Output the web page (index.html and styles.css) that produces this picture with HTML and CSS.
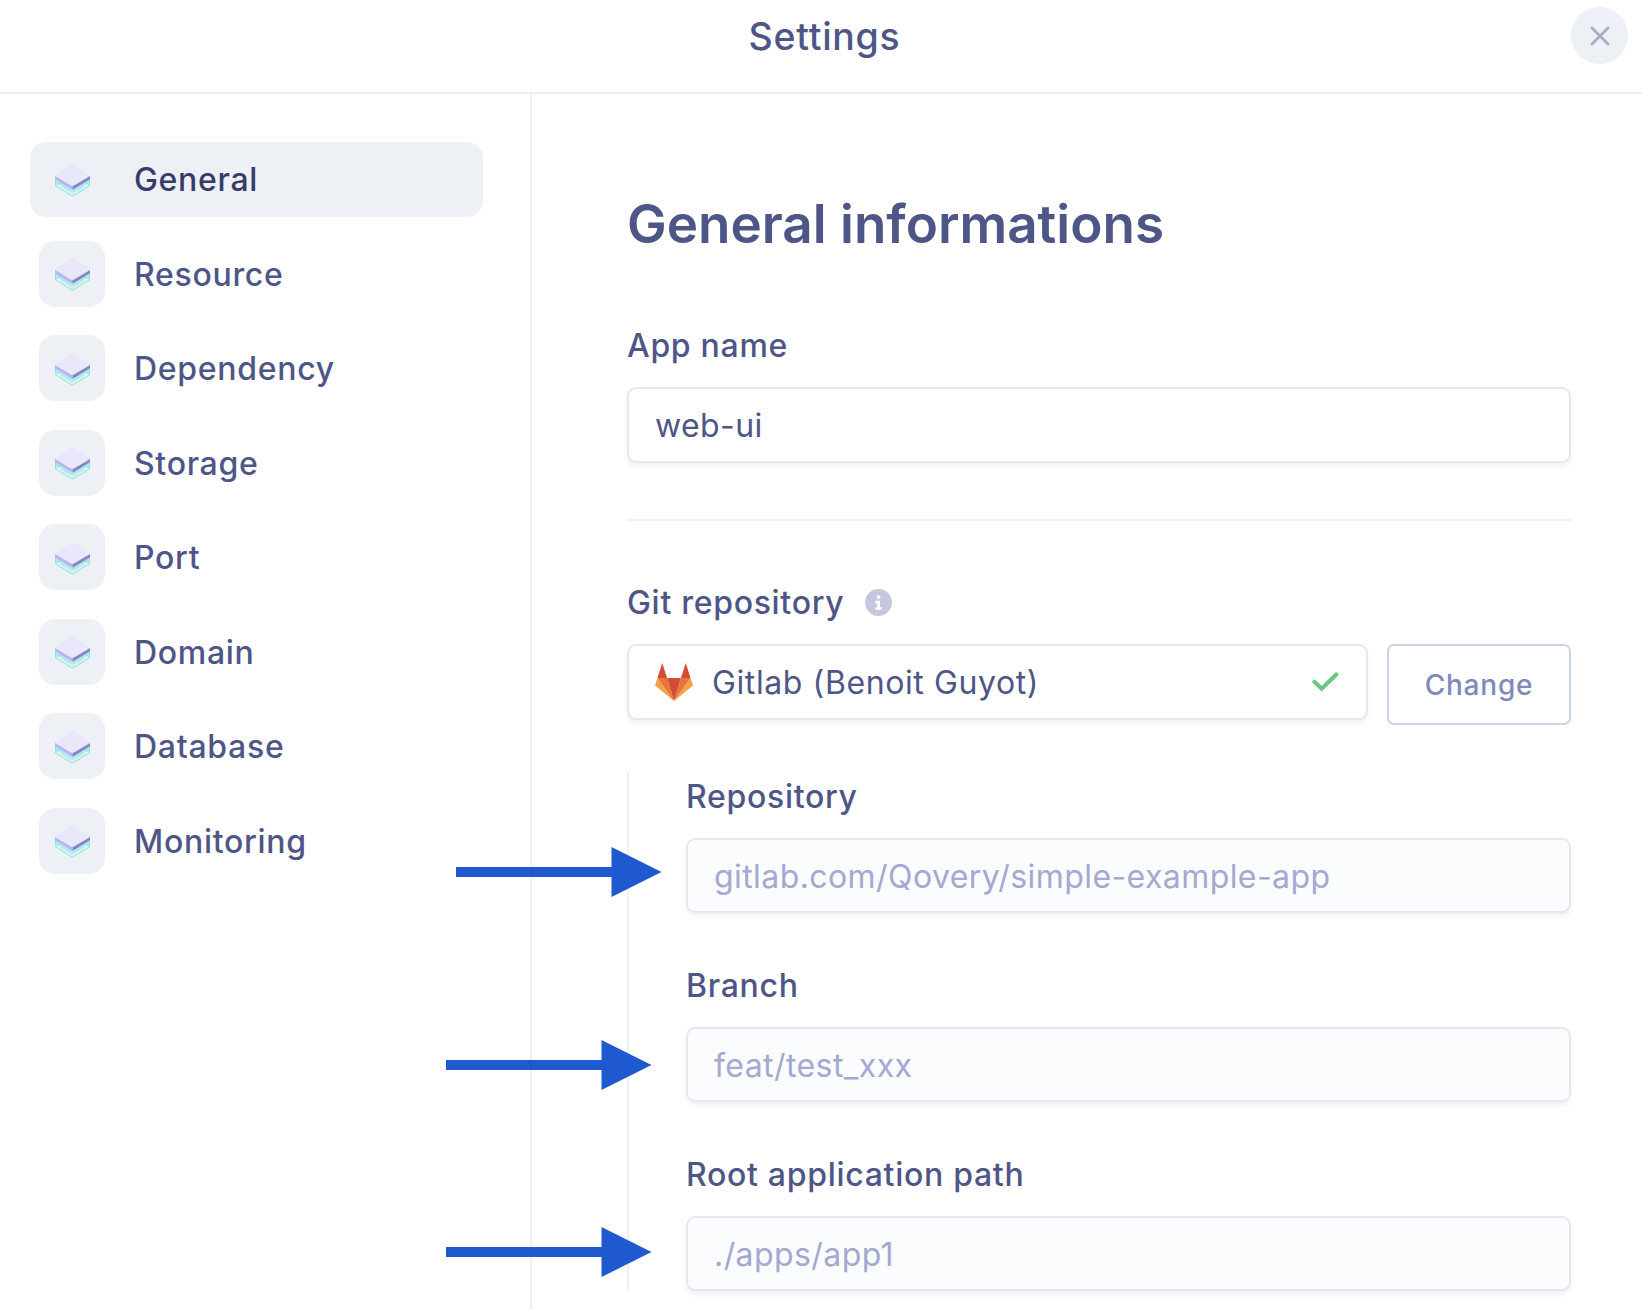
FILE: index.html
```html
<!DOCTYPE html>
<html lang="en">
<head>
<meta charset="utf-8">
<title>Settings</title>
<link rel="stylesheet" href="styles.css">
</head>
<body>
<svg class="defs" width="0" height="0" aria-hidden="true">
  <symbol id="layers" viewBox="0 0 35 33">
    <path d="M.5 14v7.800L16 31.500q1.500.900 3 0l15.500-9.700V14z" fill="#d9f1f2"/>
    <path d="M0 14v5l16 9.300q1.500.800 3 0L35 19v-5z" fill="#aeecea"/>
    <path d="M1.500 20v1.500L3.500 23l3-1.500zM33.500 20v1.500l-2 1.500-3-1.500z" fill="#edf3f7"/>
    <path d="M.5 14v7.800L16 31.500q1.500.900 3 0l15.500-9.700V14M.5 21.500l5-3.500M34.500 21.500l-5-3.500" fill="none" stroke="#86e3dc" stroke-width=".9"/>
    <path d="M0 11.500v3.700l16 9.900 1.500.400v-5z" fill="#b9b3f6"/>
    <path d="M35 11.500v3.700l-16 9.900-1.500.400v-5z" fill="#8a84c4"/>
    <path d="M16 .500q1.500-.800 3 0l15.200 10.300q1.200.900 0 1.800L19 21.500q-1.500.800-3 0L.8 12.600q-1.200-.900 0-1.800z" fill="#e9e7fa"/>
  </symbol>
</svg>
<header class="topbar">
  <h1 class="topbar-title">Settings</h1>
  <button class="close" aria-label="Close">
    <svg width="20" height="20" viewBox="0 0 20 20"><path d="M2 2l16 16m0-16l-16 16" stroke="#9fadc6" stroke-width="2.700" stroke-linecap="round"/></svg>
  </button>
</header>
<div class="body">
  <nav class="sidebar">
    <a class="item active"><span class="tile"><svg><use href="#layers"/></svg></span><span class="name">General</span></a>
    <a class="item"><span class="tile"><svg><use href="#layers"/></svg></span><span class="name">Resource</span></a>
    <a class="item"><span class="tile"><svg><use href="#layers"/></svg></span><span class="name">Dependency</span></a>
    <a class="item"><span class="tile"><svg><use href="#layers"/></svg></span><span class="name">Storage</span></a>
    <a class="item"><span class="tile"><svg><use href="#layers"/></svg></span><span class="name">Port</span></a>
    <a class="item"><span class="tile"><svg><use href="#layers"/></svg></span><span class="name">Domain</span></a>
    <a class="item"><span class="tile"><svg><use href="#layers"/></svg></span><span class="name">Database</span></a>
    <a class="item"><span class="tile"><svg><use href="#layers"/></svg></span><span class="name">Monitoring</span></a>
  </nav>
  <main class="content">
    <h2 class="heading">General informations</h2>
    <section class="field">
      <div class="label">App name</div>
      <div class="input tight">web-ui</div>
    </section>
    <hr class="divider">
    <section class="field">
      <div class="label">Git repository
        <svg class="info" width="27" height="27" viewBox="0 0 27 27"><circle cx="13.500" cy="13.500" r="13.400" fill="#c4c7de"/><circle cx="13.500" cy="8" r="1.900" fill="#fff"/><path d="M10.300 11.700h4.700v6.500h1.800v2.500h-6.600v-2.500h1.900v-4h-1.800z" fill="#fff"/></svg>
      </div>
      <div class="row">
        <div class="input provider">
          <svg class="gitlab" width="38" height="38" viewBox="0 0 38 38">
            <path d="M2.500 15L7.200 0l4.900 15zM25.900 15L30.800 0l4.700 15z" fill="#d04e35"/>
            <path d="M2.500 15L0 22.600 19 38zM35.500 15l2.500 7.600L19 38z" fill="#f0a445"/>
            <path d="M2.500 15h9.600L19 38zM35.500 15h-9.600L19 38z" fill="#e9733a"/>
            <path d="M12.100 15h13.800L19 38z" fill="#d04e35"/>
          </svg>
          <span class="provider-name">Gitlab (Benoit Guyot)</span>
          <svg class="check" width="27" height="20" viewBox="0 0 27 20"><path d="M2.500 9.800l7.200 6.900L24.300 2.600" fill="none" stroke="#6cc780" stroke-width="4.200" stroke-linecap="round" stroke-linejoin="miter"/></svg>
        </div>
        <button class="change">Change</button>
      </div>
    </section>
    <div class="group">
      <section class="field">
        <div class="label">Repository</div>
        <div class="input tight disabled">gitlab.com/Qovery/simple-example-app</div>
      </section>
      <section class="field">
        <div class="label">Branch</div>
        <div class="input tight disabled">feat/test_xxx</div>
      </section>
      <section class="field">
        <div class="label">Root application path</div>
        <div class="input tight disabled">./apps/app1</div>
      </section>
    </div>
  </main>
</div>
<svg class="arrow arrow-repository" viewBox="0 0 206 50"><path d="M0 20h155.500V0L205.500 25l-50 25V30H0z"/></svg>
<svg class="arrow arrow-branch" viewBox="0 0 206 50"><path d="M0 20h155.500V0L205.500 25l-50 25V30H0z"/></svg>
<svg class="arrow arrow-path" viewBox="0 0 206 50"><path d="M0 20h155.500V0L205.500 25l-50 25V30H0z"/></svg>
</body>
</html>
```
FILE: styles.css
```css
* { box-sizing: border-box; }
body {
  margin: 0;
  height: 1310px;
  position: relative;
  display: flex;
  flex-direction: column;
  overflow: hidden;
  background: #fff;
  color: #4e5687;
  font: 500 32px/40px Inter, "Liberation Sans", sans-serif;
  letter-spacing: .7px;
}
button { padding: 0; font: inherit; letter-spacing: inherit; background: none; border: 0; }
.defs { position: absolute; }

.topbar {
  flex: none;
  height: 94px;
  display: grid;
  grid-template-columns: 1fr auto 1fr;
  align-items: start;
  padding: 7px 14px 0 21px;
  border-bottom: 2px solid #edf0f6;
}
.topbar-title {
  grid-column: 2;
  margin: 6px 0 0;
  font-size: 37.500px;
  line-height: 48px;
  font-weight: 500;
  letter-spacing: .7px;
}
.close {
  justify-self: end;
  width: 57px;
  height: 57px;
  border-radius: 50%;
  background: #edf0f5;
  display: flex;
  align-items: center;
  justify-content: center;
}

.body { flex: 1; display: flex; min-height: 0; }
.sidebar {
  flex: none;
  width: 532px;
  padding: 47.500px 47px 0 30px;
  border-right: 2px solid #edf1f7;
  display: flex;
  flex-direction: column;
  gap: 19px;
}
.item {
  height: 75.500px;
  padding-left: 9px;
  display: flex;
  align-items: center;
  gap: 29px;
  border-radius: 16px;
}
.active { background: #edf0f5; color: #373b66; }
.name { padding-top: 1.500px; }
.tile {
  width: 66px;
  height: 66px;
  padding-top: 2px;
  border-radius: 16px;
  background: #edf0f5;
  display: flex;
  align-items: center;
  justify-content: center;
}
.tile svg { width: 35px; height: 33px; }

.content { flex: 1; padding: 98px 71px 0 95px; }
.heading {
  margin: 0 0 69px;
  font-size: 53px;
  line-height: 64px;
  font-weight: 600;
  letter-spacing: 0;
  white-space: nowrap;
}
.label {
  height: 40px;
  margin-bottom: 22px;
  padding-top: 1px;
  display: flex;
  align-items: center;
}
.info { margin-left: 21px; }
.input {
  height: 76px;
  padding: 0 27px 0 26px;
  display: flex;
  align-items: center;
  border: 2px solid #e3e8f3;
  border-radius: 9px;
  background: #fff;
  box-shadow: 0 4px 5px rgba(0, 0, 0, .05);
  font-weight: 400;
}
.tight { padding-top: 2px; letter-spacing: .42px; }
.divider { margin: 56px 0 61px; border: 0; height: 2px; background: #edf0f6; }
.row { display: flex; align-items: flex-start; gap: 19px; }
.provider { flex: 1; }
.provider-name { padding-top: 2px; letter-spacing: .6px; }
.gitlab { margin-right: 19px; }
.check { margin-left: auto; }
.change {
  width: 184px;
  height: 81px;
  border: 2px solid #c9d5e6;
  border-radius: 7px;
  color: #808aba;
  font-size: 28px;
  letter-spacing: .8px;
}
.group {
  margin-top: 47px;
  padding: 4px 0 0 57px;
  border-left: 2px solid #edf0f8;
  display: flex;
  flex-direction: column;
  gap: 52px;
}
.disabled { height: 75px; background: #fbfcfe; color: #a3a9d0; }

.arrow { position: absolute; width: 206px; height: 50px; fill: #1f59cf; }
.arrow-repository { left: 456px; top: 847px; }
.arrow-branch { left: 446px; top: 1040px; }
.arrow-path { left: 446px; top: 1227px; }
```
